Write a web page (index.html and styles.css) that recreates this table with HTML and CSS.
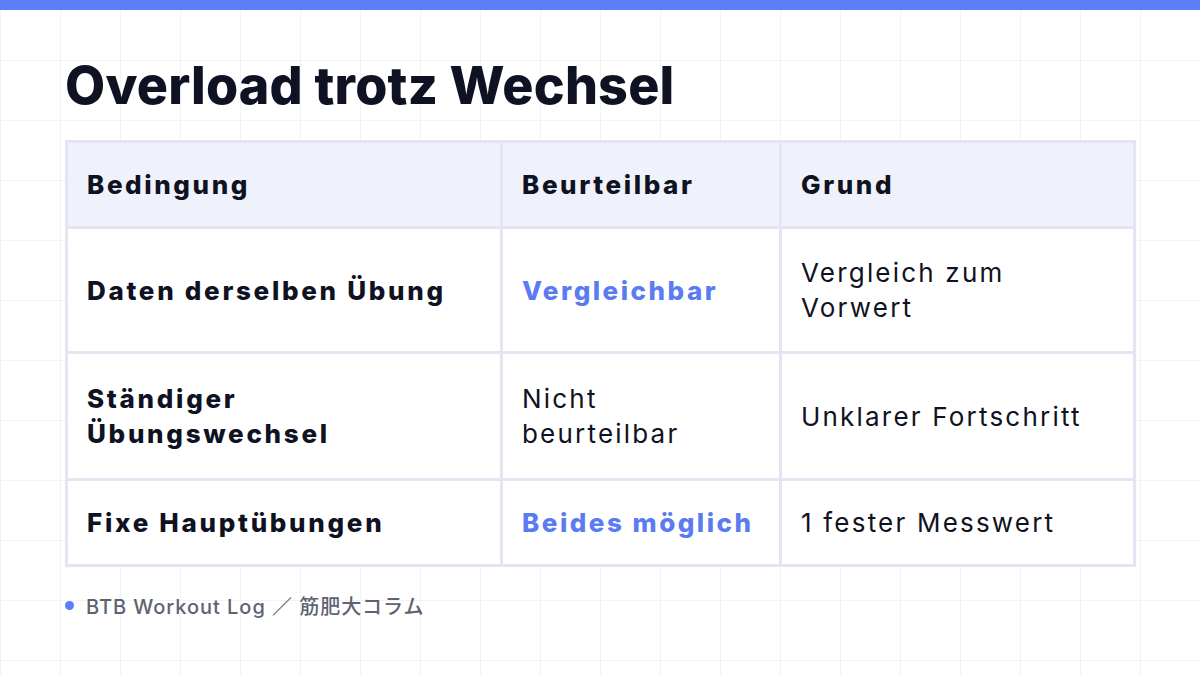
FILE: index.html
```html
<!DOCTYPE html>
<html lang="de">
<head>
<meta charset="utf-8">
<link rel="stylesheet" href="styles.css">
</head>
<body>
<div class="topbar"></div>
<main class="slide">
  <h1 class="title">Overload trotz Wechsel</h1>
  <table class="grid-table">
    <colgroup>
      <col class="c1"><col class="c2"><col class="c3">
    </colgroup>
    <thead>
      <tr><th>Bedingung</th><th>Beurteilbar</th><th>Grund</th></tr>
    </thead>
    <tbody>
      <tr class="r1">
        <td class="strong">Daten derselben Übung</td>
        <td class="accent">Vergleichbar</td>
        <td>Vergleich zum<br>Vorwert</td>
      </tr>
      <tr class="r2">
        <td class="strong">Ständiger<br>Übungswechsel</td>
        <td>Nicht<br>beurteilbar</td>
        <td>Unklarer Fortschritt</td>
      </tr>
      <tr class="r3">
        <td class="strong">Fixe Hauptübungen</td>
        <td class="accent">Beides möglich</td>
        <td>1 fester Messwert</td>
      </tr>
    </tbody>
  </table>
  <footer class="foot">
    <span class="dot"></span>
    <span class="foot-text">BTB Workout Log ／ 筋肥大コラム</span>
  </footer>
</main>
</body>
</html>
```

FILE: styles.css
```css
html, body {
  margin: 0;
  padding: 0;
}
body {
  width: 1200px;
  height: 675px;
  overflow: hidden;
  background-color: #ffffff;
  background-image:
    linear-gradient(to right, #f2f3f7 1px, transparent 1px),
    linear-gradient(to bottom, #f2f3f7 1px, transparent 1px);
  background-size: 60px 60px;
  background-position: 0 0;
  font-family: Inter, "Noto Sans CJK JP", sans-serif;
  color: #0f1222;
}
.topbar {
  height: 10px;
  background: #5c7cf8;
}
.slide {
  padding: 0 65px;
}
.title {
  margin: 0;
  padding-top: 44px;
  font-size: 52px;
  line-height: 64px;
  font-weight: 800;
  letter-spacing: 0.2px;
  color: #0f1222;
}
.grid-table {
  margin-top: 22px;
  width: 1068px;
  border-collapse: collapse;
  table-layout: fixed;
  background: #ffffff;
  border: 3px solid #e3e6f2;
}
.c1 { width: 435px; }
.c2 { width: 279px; }
.c3 { width: 354px; }
.grid-table th,
.grid-table td {
  border: 3px solid #e3e6f2;
  padding: 24px 20px 24px 19px;
  font-size: 26px;
  line-height: 35px;
  letter-spacing: 2.2px;
  text-align: left;
  vertical-align: middle;
}
.grid-table th {
  background: #eff2fa;
  font-weight: 800;
  letter-spacing: 2.6px;
  height: 32px;
}
.grid-table td {
  font-weight: 400;
}
.r1 td { height: 74px; }
.r2 td { height: 76px; }
.grid-table td.strong {
  font-weight: 800;
  letter-spacing: 2.7px;
}
.grid-table td.accent {
  font-weight: 800;
  letter-spacing: 2.5px;
  color: #5b7cf1;
}
.foot {
  margin-top: 24px;
  display: flex;
  align-items: center;
  gap: 12px;
}
.dot {
  width: 9px;
  height: 9px;
  border-radius: 50%;
  background: #5c7cf8;
}
.foot-text {
  font-size: 20px;
  color: #5d6373;
  font-weight: 500;
  letter-spacing: 0.95px;
}
```
